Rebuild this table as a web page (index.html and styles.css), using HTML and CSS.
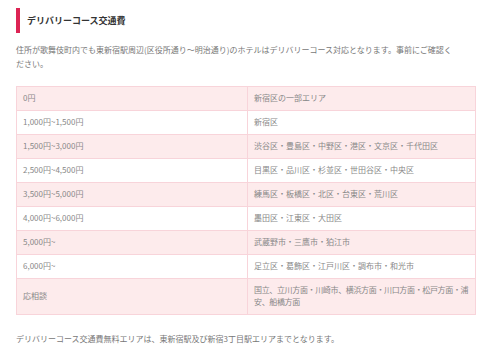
FILE: index.html
```html
<!DOCTYPE html>
<html lang="ja">
<head>
<meta charset="utf-8">
<link rel="stylesheet" href="styles.css">
</head>
<body>
<section class="wrap">
  <h2 class="heading">デリバリーコース交通費</h2>
  <p class="lead">住所が歌舞伎町内でも東新宿駅周辺(区役所通り〜明治通り)のホテルはデリバリーコース対応となります。事前にご確認く<br>ださい。</p>
  <table class="fees">
    <tr class="pink"><td>0円</td><td>新宿区の一部エリア</td></tr>
    <tr><td>1,000円~1,500円</td><td>新宿区</td></tr>
    <tr class="pink"><td>1,500円~3,000円</td><td>渋谷区・豊島区・中野区・港区・文京区・千代田区</td></tr>
    <tr><td>2,500円~4,500円</td><td>目黒区・品川区・杉並区・世田谷区・中央区</td></tr>
    <tr class="pink"><td>3,500円~5,000円</td><td>練馬区・板橋区・北区・台東区・荒川区</td></tr>
    <tr><td>4,000円~6,000円</td><td>墨田区・江東区・大田区</td></tr>
    <tr class="pink"><td>5,000円~</td><td>武蔵野市・三鷹市・狛江市</td></tr>
    <tr><td>6,000円~</td><td>足立区・葛飾区・江戸川区・調布市・和光市</td></tr>
    <tr class="pink"><td>応相談</td><td class="tight">国立、立川方面・川崎市、横浜方面・川口方面・松戸方面・浦<br>安、船橋方面</td></tr>
  </table>
  <p class="note">デリバリーコース交通費無料エリアは、東新宿駅及び新宿3丁目駅エリアまでとなります。</p>
</section>
</body>
</html>
```
FILE: styles.css
```css
* { box-sizing: border-box; }
html, body { margin: 0; padding: 0; background: #fff; }
body {
  font-family: "Noto Sans CJK JP", "Noto Sans", sans-serif;
  color: #777;
}
.wrap {
  width: 460px;
  margin-left: 16px;
  padding-top: 8px;
}
.heading {
  margin: 0;
  height: 25px;
  border-left: 4px solid #dc2454;
  padding-left: 7px;
  display: flex;
  align-items: center;
  font-size: 9px;
  font-weight: bold;
  color: #333;
}
.lead {
  margin: 10px 0 0;
  font-size: 8px;
  line-height: 14px;
  white-space: nowrap;
}
.fees {
  margin-top: 15px;
  width: 100%;
  border-collapse: collapse;
  table-layout: fixed;
  font-size: 8px;
  line-height: 12px;
  color: #888;
}
.fees td {
  border: 1px solid #f8d4da;
  padding: 5px 6px 6px;
  vertical-align: middle;
  white-space: nowrap;
  overflow: hidden;
}
.fees td:first-child { width: 231px; }
.fees td.tight { letter-spacing: -0.35px; }
.fees tr.pink td { background: #fdebec; }
.note {
  margin: 17px 0 0;
  font-size: 8px;
  line-height: 14px;
}
```
